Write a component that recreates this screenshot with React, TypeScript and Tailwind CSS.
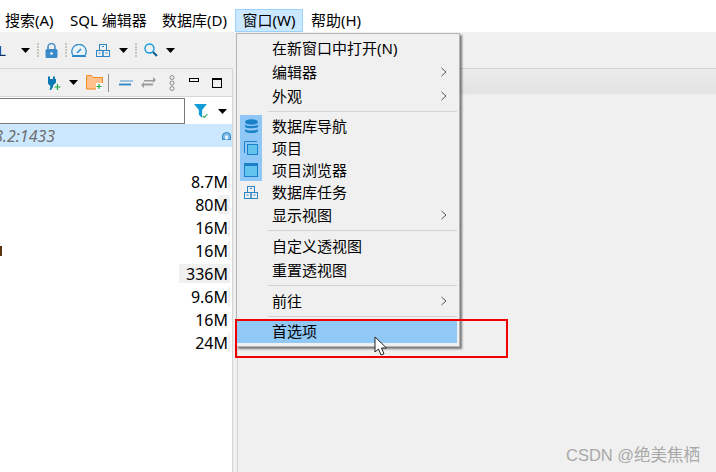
import React from 'react';

const font = "font-['Noto_Sans','Noto_Sans_CJK_SC',sans-serif]";

// size label and width of the usage bar behind it
const sizes = [
  { label: '8.7M', bar: 2 },
  { label: '80M', bar: 12 },
  { label: '16M', bar: 2 },
  { label: '16M', bar: 2 },
  { label: '336M', bar: 51 },
  { label: '9.6M', bar: 2 },
  { label: '16M', bar: 0 },
  { label: '24M', bar: 2 },
];

const Caret = ({ className = '' }: { className?: string }) => (
  <svg width="9" height="5" viewBox="0 0 9 5" className={`shrink-0 ${className}`}>
    <path d="M0 0h9L4.500 5z" fill="#000" />
  </svg>
);

const Grip = ({ className = '' }: { className?: string }) => (
  <div className={`flex h-[14px] w-[2px] shrink-0 flex-col justify-between ${className}`}>
    {[0, 1, 2, 3, 4].map((i) => (
      <div key={i} className="h-[2px] w-[2px] bg-[#c9c5ba]" />
    ))}
  </div>
);

const TaskIcon = ({ className = '' }: { className?: string }) => (
  <svg width="14" height="13" viewBox="0 0 14 13" fill="none" stroke="#2b86c5" strokeWidth="1" className={`shrink-0 ${className}`}>
    <rect x="3.500" y="0.500" width="7" height="6" />
    <rect x="0.500" y="6.500" width="6.500" height="6" />
    <rect x="7" y="6.500" width="6.500" height="6" />
    <path d="M6 2.500h2M2.500 9h2M9.500 9h2" />
  </svg>
);

const Chevron = () => (
  <svg width="6" height="10" viewBox="0 0 6 10" fill="none" stroke="#555" strokeWidth="1" className="absolute right-[12px] top-1/2 -translate-y-1/2">
    <path d="M0.500 1l4.500 4-4.500 4" />
  </svg>
);

const MenuItem = ({ label, sub, h = 'h-[24px]', icon }: { label: string; sub?: boolean; h?: string; icon?: React.ReactNode }) => (
  <div className={`relative flex items-center pl-[35px] text-[15px] text-black ${h}`}>
    {icon && <div className="absolute left-[3px] top-0 flex h-full w-[22px] items-center justify-center">{icon}</div>}
    <span>{label}</span>
    {sub && <Chevron />}
  </div>
);

const Separator = () => <div className="my-[3px] ml-[31px] mr-[2px] h-[1px] bg-[#d3d3d3]" />;

const WindowMenu = () => (
  <div className="absolute left-[236px] top-[33px] h-[314px] w-[224px] border border-[#b5b5b5] bg-[#f0f0f0] pt-[2px] shadow-[2px_2px_2px_rgba(0,0,0,0.5)]">
    <MenuItem label="在新窗口中打开(N)" />
    <MenuItem label="编辑器" sub />
    <MenuItem label="外观" sub />
    <Separator />
    <div className="relative">
      <div className="absolute left-[3px] top-0 h-[66px] w-[22px] bg-[#8fc8f7]" />
      <MenuItem
        label="数据库导航"
        h="h-[22px]"
        icon={
          <svg width="15" height="15" viewBox="0 0 15 15">
            <ellipse cx="7.500" cy="3" rx="6.500" ry="2.800" fill="#1a80c8" />
            <path d="M1 5.500c1 2 12 2 13 0v2.200c-1 2-12 2-13 0zM1 10c1 2 12 2 13 0v2c-1 2.800-12 2.800-13 0z" fill="#1a80c8" />
          </svg>
        }
      />
      <MenuItem
        label="项目"
        h="h-[22px]"
        icon={
          <svg width="14" height="14" viewBox="0 0 14 14">
            <path d="M0.500 12V0.500H13" fill="none" stroke="#1a80c8" />
            <rect x="3.500" y="3.500" width="10" height="10" fill="#62c4ec" stroke="#1a80c8" />
          </svg>
        }
      />
      <MenuItem
        label="项目浏览器"
        h="h-[22px]"
        icon={
          <svg width="14" height="14" viewBox="0 0 14 14">
            <rect x="0.500" y="0.500" width="13" height="13" fill="#62c4ec" stroke="#1a80c8" />
            <rect x="0" y="0" width="14" height="3" fill="#1a80c8" />
          </svg>
        }
      />
      <MenuItem label="数据库任务" h="h-[22px]" icon={<TaskIcon />} />
    </div>
    <MenuItem label="显示视图" sub />
    <Separator />
    <MenuItem label="自定义透视图" />
    <MenuItem label="重置透视图" />
    <Separator />
    <MenuItem label="前往" sub />
    <Separator />
    <div className="mr-[2px] mt-[1px] flex h-[23px] items-center bg-[#90c8f6] pl-[35px] text-[15px] text-black">首选项</div>
  </div>
);

export default function App() {
  return (
    <div className={`${font} relative h-[472px] w-[716px] overflow-hidden bg-[#f0f0f0]`}>
      {/* menu bar */}
      <div className="flex h-[32px] items-end bg-white pl-[5px] text-[15px] leading-[23px] text-black">
        <span className="w-[51px]">搜索(A)</span>
        <span className="ml-[14px] w-[78px]">SQL 编辑器</span>
        <span className="ml-[14px] w-[66px]">数据库(D)</span>
        <span className="ml-[7px] flex h-[23px] w-[68px] items-center justify-center border border-[#99d1ff] bg-[#cce8ff]">窗口(W)</span>
        <span className="ml-[8px]">帮助(H)</span>
      </div>

      {/* main toolbar */}
      <div className="flex h-[36px] items-center bg-[#f0f0f0] text-[15px]">
        <span className="ml-[-2px] w-[7px] text-[#10305e]">L</span>
        <Caret className="ml-[16px]" />
        <Grip className="ml-[7px]" />
        <svg width="13" height="15" viewBox="0 0 13 15" className="ml-[6px] shrink-0">
          <path d="M3 7V4a3.500 3.500 0 0 1 7 0v3" fill="none" stroke="#4a90c8" strokeWidth="1.600" />
          <rect x="0.500" y="6" width="12" height="9" rx="1.500" fill="#3b8bcb" />
          <circle cx="6.500" cy="10.500" r="1.300" fill="#fff" />
        </svg>
        <Grip className="ml-[7px]" />
        <svg width="16" height="13" viewBox="0 0 16 13" fill="none" stroke="#2b86c5" className="ml-[4px] shrink-0">
          <path d="M2 11.500a7.200 7.200 0 1 1 12 0z" strokeWidth="1.200" fill="#e8f2fa" />
          <path d="M6 9l4-4" strokeWidth="1.400" />
          <path d="M1 12.500h14" strokeWidth="1" />
        </svg>
        <TaskIcon className="ml-[9px]" />
        <Caret className="ml-[9px]" />
        <Grip className="ml-[7px]" />
        <svg width="14" height="14" viewBox="0 0 14 14" fill="none" className="ml-[7px] shrink-0">
          <circle cx="5.500" cy="5.500" r="4.500" strokeWidth="1.400" stroke="#0e9be0" />
          <path d="M9 9l4 4" strokeWidth="2.200" stroke="#10608f" />
        </svg>
        <Caret className="ml-[8px]" />
      </div>

      <div className="flex h-[404px]">
        {/* navigator panel */}
        <div className="flex w-[233px] shrink-0 flex-col border-r border-t border-[#d6d6d6] bg-white">
          <div className="flex h-[28px] shrink-0 items-center border-b border-b-[#d6d6d6] bg-[#f0f0f0]">
            <svg width="15" height="15" viewBox="0 0 15 15" className="ml-[46px] shrink-0">
              <path d="M2 1.500h2v2.500h3V1.500h2V4h1v3.500L7 10.500V12l-2 3H3.500l1-3.500L2 8.500z" fill="#0b79b4" />
              <path d="M8.500 12h6M11.500 9v6" stroke="#1aa84a" strokeWidth="1.200" />
            </svg>
            <Caret className="ml-[8px]" />
            <svg width="17" height="15" viewBox="0 0 17 15" className="ml-[8px] shrink-0">
              <path d="M0.500 0.500h5l2 2h9v11.500h-16z" fill="#fdc08c" stroke="#f28a1e" />
              <rect x="10" y="8" width="7" height="7" fill="#f7f7f7" />
              <path d="M10.500 11.500h5M13 9v5" stroke="#1aa84a" strokeWidth="1.200" />
            </svg>
            <div className="ml-[5px] h-[18px] w-[1px] shrink-0 bg-[#8f8f8f]" />
            <svg width="14" height="6" viewBox="0 0 14 6" className="ml-[10px] shrink-0">
              <path d="M1 1h13" stroke="#6ea7d6" strokeWidth="1.200" />
              <path d="M0 4.500h12" stroke="#2b86c5" strokeWidth="1.800" />
            </svg>
            <svg width="15" height="11" viewBox="0 0 15 11" className="ml-[8px] shrink-0">
              <path d="M3 3h9V0l3 3-3 3V4.500H3zM12 6.500v2H3v2.500L0 8l3-3v1.500z" fill="#9c9c9c" />
            </svg>
            <svg width="6" height="16" viewBox="0 0 6 16" fill="none" stroke="#8c8c8c" className="ml-[13px] shrink-0">
              <circle cx="3" cy="2.500" r="2" />
              <circle cx="3" cy="8" r="2" />
              <circle cx="3" cy="13.500" r="2" />
            </svg>
            <div className="mb-[6px] ml-[14px] h-[4px] w-[10px] shrink-0 border border-black" />
            <div className="ml-[13px] h-[10px] w-[10px] shrink-0 border border-t-2 border-black" />
          </div>
          <div className="flex h-[27px] shrink-0 items-end">
            <div className="h-[26px] w-[185px] shrink-0 border border-l-0 border-[#7a7a7a] bg-white" />
            <svg width="14" height="14" viewBox="0 0 13 13" className="mb-[6px] ml-[9px] shrink-0">
              <path d="M0 0h12L7.500 5.500V13L4.500 10V5.500z" fill="#139bd8" />
              <path d="M8 11l1.500 1.500 3-3" fill="none" stroke="#35a852" />
            </svg>
            <Caret className="mb-[10px] ml-[10px]" />
          </div>
          <div className="relative flex h-[23px] shrink-0 items-center overflow-hidden bg-[#cce8ff]">
            <span className="absolute left-[-6px] text-[16px] italic text-[#6f6f6f]">8.2:1433</span>
            <svg width="9" height="8" viewBox="0 0 9 8" className="ml-auto mr-[1px]">
              <path d="M0.500 7.500V4a4 3.500 0 0 1 8 0v3.500z" fill="#7fb8e0" stroke="#2b86c5" />
              <rect x="3" y="3.500" width="3" height="4" fill="#e4f2fc" />
            </svg>
          </div>
          <div className="flex flex-col pr-[2px] pt-[23px] text-[16px] text-black">
            {sizes.map((size, i) => (
              <div key={i} className="relative flex h-[23px] items-center justify-end pr-[2px]">
                {i === 3 && <div className="absolute left-0 h-[10px] w-[2px] bg-[#5a3514]" />}
                <div className="absolute right-0 h-[19px] bg-[#f0f0f0]" style={{ width: size.bar }} />
                <span className="relative">{size.label}</span>
              </div>
            ))}
          </div>
        </div>

        {/* editor area */}
        <div className="ml-[4px] flex-1 border-l border-l-[#d6d6d6]">
          <div className="h-[26px] border-t border-t-[#d6d6d6] bg-gradient-to-b from-[#ebebeb] to-[#e3e3e3]" />
        </div>
      </div>

      <WindowMenu />

      {/* red annotation box */}
      <div className="absolute left-[235px] top-[319px] h-[39px] w-[273px] border-2 border-[#f00000]" />

      {/* mouse pointer */}
      <svg width="14" height="20" viewBox="0 0 14 20" className="absolute left-[374px] top-[336px]">
        <path d="M1 1v15l3.500-3 2.500 6 3-1.200-2.500-5.800H12.500z" fill="#fff" stroke="#222" strokeWidth="1" />
      </svg>

      {/* watermark */}
      <span className="absolute left-[566px] top-[443px] font-['Liberation_Sans','Noto_Sans_CJK_SC',sans-serif] text-[16.5px] text-[#a8a8a8]">CSDN @绝美焦栖</span>
    </div>
  );
}
